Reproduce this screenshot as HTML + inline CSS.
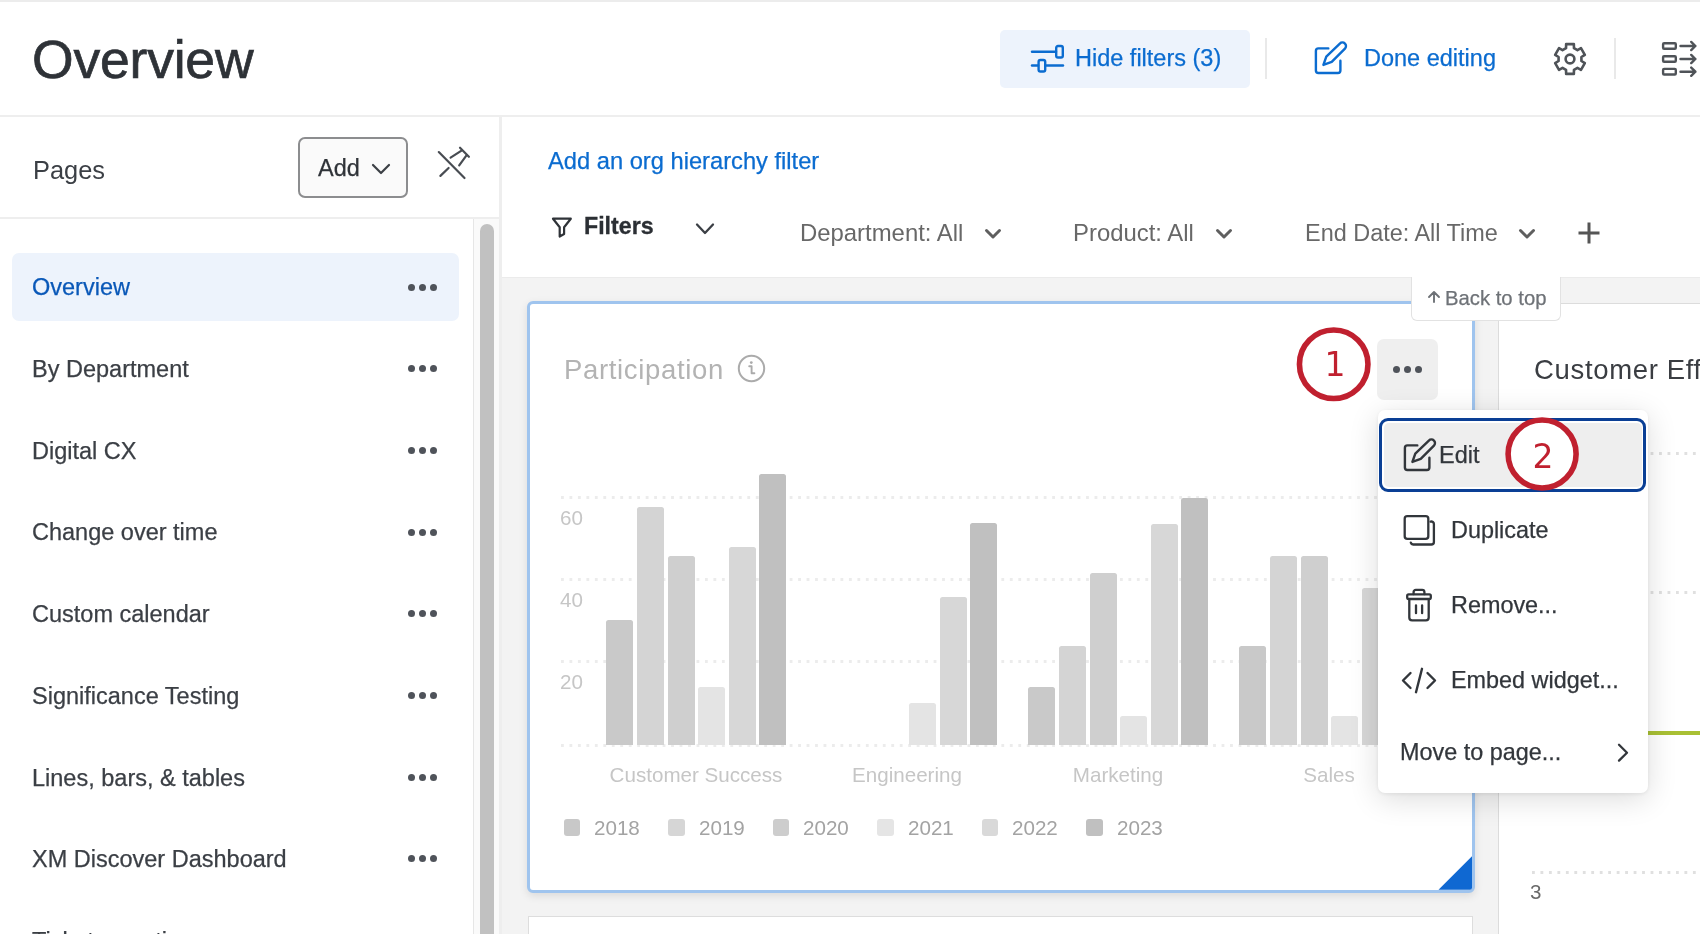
<!DOCTYPE html>
<html lang="en">
<head>
<meta charset="utf-8">
<title>Overview</title>
<style>
html,body{margin:0;padding:0;}
body{width:1700px;height:934px;overflow:hidden;background:#fff;position:relative;font-family:"Liberation Sans",Arial,sans-serif;color:#32363b;}
.abs{position:absolute;}
.t{will-change:transform;position:absolute;line-height:1;white-space:nowrap;}
svg{position:absolute;overflow:visible;}
/* top strip */
#topstrip{left:0;top:0;width:1700px;height:2px;background:#ececec;}
/* header */
#header{left:0;top:2px;width:1700px;height:113px;background:#fff;border-bottom:2px solid #eeeeee;}
#title{left:32.4px;top:32.7px;font-size:53.5px;color:#2e3237;letter-spacing:-0.2px;-webkit-text-stroke:0.7px #2e3237;}
#hidebtn{left:1000px;top:30px;width:250px;height:58px;border-radius:5px;background:#edf3fc;}
.blue{color:#0b6cd0;-webkit-text-stroke:0.25px #0b6cd0;}
.vdiv{width:2px;background:#e9e9e9;}
/* sidebar */
#sidebar{left:0;top:117px;width:499px;height:817px;background:#fff;border-right:3px solid #eeeeee;}
#pageshead{left:0;top:0;width:499px;height:100px;border-bottom:2px solid #eeeeee;}
#addbtn{box-sizing:border-box;left:298px;top:137px;width:110px;height:61px;border:2px solid #8c8d8f;border-radius:7px;background:#fafafa;}
.pitem{left:32px;font-size:23.5px;color:#3b3f45;-webkit-text-stroke:0.25px currentColor;}
.dots{position:absolute;left:407.8px;width:30px;height:8px;}
.dots i{position:absolute;top:0;width:7px;height:7px;border-radius:50%;background:#4f535a;}
.dots i:nth-child(1){left:0}.dots i:nth-child(2){left:11px}.dots i:nth-child(3){left:22px}
#selitem{left:12px;top:253px;width:447px;height:68px;border-radius:7px;background:#edf3fc;}
#sbtrack{left:473px;top:219px;width:25px;height:715px;border-left:1px solid #e6e6e6;background:#fafafa;}
#sbthumb{left:480px;top:224px;width:14px;height:730px;border-radius:7px;background:#c1c1c1;}
/* main */
#main{left:502px;top:117px;width:1198px;height:817px;background:#f3f3f3;}
#filterbar{left:502px;top:117px;width:1198px;height:160px;background:#fff;border-bottom:1.5px solid #ebebeb;}
.ftext{font-size:23.9px;color:#686868;}
/* widget */
#w1{left:527px;top:301px;width:942.3px;height:586.2px;border:3px solid #9fc4ee;border-radius:6px;background:#fff;box-shadow:0 3px 8px rgba(0,0,0,.10);}
#w2{left:1498px;top:302.6px;width:230px;height:700px;border:1.5px solid #dcdcdc;background:#fff;}
#w3{left:528px;top:916px;width:943px;height:60px;border:1px solid #dddddd;background:#fff;}
#backtop{left:1411px;top:277px;width:147.5px;height:42.5px;background:#fff;border:1.5px solid #e2e2e2;border-top:none;border-radius:0 0 6px 6px;}
.chart{font-size:20.6px;color:#c6c6c6;}
.bar{position:absolute;width:27px;border-radius:2.5px 2.5px 0 0;}
.grid{position:absolute;height:3px;background-image:linear-gradient(90deg,#ececec 3px,rgba(236,236,236,0) 3px);background-size:8.47px 3px;background-repeat:repeat-x;}
.grid.dk{background-image:linear-gradient(90deg,#e0e0e0 3.2px,rgba(224,224,224,0) 3.2px);}
.lg{position:absolute;width:16.5px;height:16.5px;border-radius:3px;top:819px;}
/* menu */
#menu{left:1378px;top:410px;width:269.5px;height:383px;border-radius:7px;background:#fff;box-shadow:0 6px 30px rgba(0,0,0,.14),0 1px 4px rgba(0,0,0,.08);}
#editring{left:1378.5px;top:417.8px;width:261.9px;height:68.3px;border:3.4px solid #0a3f95;border-radius:9px;background:#fff;}
#editfill{left:1383.6px;top:422.9px;width:258.8px;height:64px;border-radius:5px;background:#eeeeee;}
.mi{font-size:23.4px;color:#32363b;-webkit-text-stroke:0.25px currentColor;}
.anno{position:absolute;width:63px;height:63px;border:5.5px solid #c0202f;border-radius:50%;background:#fff;}
.annot{font-family:"DejaVu Sans","Liberation Sans",sans-serif;font-size:33px;color:#c0202f;}
#morebtn{left:1376.8px;top:338.6px;width:61px;height:61px;border-radius:7px;background:#efefef;}
</style>
</head>
<body>
<div class="abs" id="header"></div>
<div class="abs" id="topstrip"></div>
<div class="t" id="title">Overview</div>

<!-- header actions -->
<div class="abs" id="hidebtn"></div>
<svg style="left:1031px;top:44px" width="34" height="30" viewBox="0 0 34 30" fill="none" stroke="#0b6cd0" stroke-width="2.4" stroke-linecap="round" stroke-linejoin="round">
  <path d="M1 7.8H25"/><rect x="25.2" y="2" width="6.6" height="11.5" rx="1.8"/>
  <path d="M1 21.5H7"/><rect x="7.6" y="16" width="6.6" height="11.5" rx="1.8"/><path d="M14.6 21.5H32"/>
</svg>
<div class="t blue" style="left:1075px;top:47.3px;font-size:23.5px;">Hide filters (3)</div>
<div class="abs vdiv" style="left:1265px;top:38px;height:41px;"></div>
<svg style="left:1305.5px;top:33.3px" width="60" height="50" viewBox="0 0 60 50" fill="none" stroke="#0b6cd0" stroke-width="2.4" stroke-linecap="round" stroke-linejoin="round">
  <path d="M22.3 15.4H12.4A2.5 2.5 0 0 0 9.9 17.9V37.5A2.5 2.5 0 0 0 12.4 40H31.9A2.5 2.5 0 0 0 34.4 37.5V27.8"/>
  <path d="M17.4 31.9L20.3 23.6L33.85 10.55A3.6 3.6 0 0 1 38.95 15.65L25.7 28.9Z"/>
</svg>
<div class="t blue" style="left:1364px;top:47px;font-size:23.5px;">Done editing</div>
<svg id="gear" style="left:1551.8px;top:40.6px" width="36" height="36" viewBox="-18 -18 36 36" fill="none" stroke="#4f5358" stroke-width="2.6" stroke-linejoin="round">
  <path d="M-3.97 -10.90 L-3.86 -14.91 L3.86 -14.91 L3.97 -10.90 L7.46 -8.89 L10.98 -10.79 L14.84 -4.12 L11.42 -2.01 L11.42 2.01 L14.84 4.12 L10.98 10.79 L7.46 8.89 L3.97 10.90 L3.86 14.91 L-3.86 14.91 L-3.97 10.90 L-7.46 8.89 L-10.98 10.79 L-14.84 4.12 L-11.42 2.01 L-11.42 -2.01 L-14.84 -4.12 L-10.98 -10.79 L-7.46 -8.89Z"/>
  <circle cx="0" cy="0" r="4.4"/>
</svg>
<div class="abs vdiv" style="left:1614px;top:38px;height:41px;"></div>
<svg style="left:1660px;top:40px" width="40" height="38" viewBox="0 0 40 38" fill="none" stroke="#4f5358" stroke-width="2.4" stroke-linecap="round" stroke-linejoin="round">
  <rect x="3.1" y="3.2" width="12.7" height="5.6" rx="1"/><path d="M20.5 6H35.4M31.2 1.9L35.4 6L31.2 10.1"/>
  <rect x="3.1" y="16.2" width="12.7" height="5.6" rx="1"/><path d="M20.5 19H35.4M31.2 14.9L35.4 19L31.2 23.1"/>
  <rect x="3.1" y="28.9" width="12.7" height="5.6" rx="1"/><path d="M20.5 31.7H35.4M31.2 27.6L35.4 31.7L31.2 35.8"/>
</svg>

<!-- SIDEBAR -->
<div class="abs" id="sidebar"><div class="abs" id="pageshead"></div></div>
<div class="t" style="left:32.5px;top:157.5px;font-size:25.4px;color:#3b3f45;">Pages</div>
<div class="abs" id="addbtn"></div>
<div class="t" style="left:318px;top:156.7px;font-size:23.5px;color:#2f3338;-webkit-text-stroke:0.25px #2f3338;">Add</div>
<svg style="left:371px;top:162px" width="20" height="14" viewBox="0 0 20 14" fill="none" stroke="#3b3f45" stroke-width="2.2" stroke-linecap="round" stroke-linejoin="round"><path d="M2 3L10 11L18 3"/></svg>
<svg id="pin" style="left:425px;top:135px" width="60" height="55" viewBox="0 0 60 55" fill="none" stroke="#484c52" stroke-width="2.2" stroke-linecap="round" stroke-linejoin="round">
  <path d="M13.8 17.1L39.5 43"/>
  <path d="M35 12.7L43.9 21.8"/>
  <path d="M25.6 22.7L36.5 15.6"/>
  <path d="M34.2 30.3L41.5 20.3"/>
  <path d="M15.4 40.9L23.6 33"/>
</svg>
<div class="abs" id="sbtrack"></div>
<div class="abs" id="sbthumb"></div>
<div class="abs" id="selitem"></div>
<div class="t pitem" style="top:276.3px;color:#0a58b8;">Overview</div><div class="dots" style="top:283.5px"><i></i><i></i><i></i></div>
<div class="t pitem" style="top:358.0px;">By Department</div><div class="dots" style="top:365.2px"><i></i><i></i><i></i></div>
<div class="t pitem" style="top:439.7px;">Digital CX</div><div class="dots" style="top:446.9px"><i></i><i></i><i></i></div>
<div class="t pitem" style="top:521.4px;">Change over time</div><div class="dots" style="top:528.6px"><i></i><i></i><i></i></div>
<div class="t pitem" style="top:603.1px;">Custom calendar</div><div class="dots" style="top:610.3px"><i></i><i></i><i></i></div>
<div class="t pitem" style="top:684.8px;">Significance Testing</div><div class="dots" style="top:692px"><i></i><i></i><i></i></div>
<div class="t pitem" style="top:766.5px;">Lines, bars, &amp; tables</div><div class="dots" style="top:773.7px"><i></i><i></i><i></i></div>
<div class="t pitem" style="top:848.2px;">XM Discover Dashboard</div><div class="dots" style="top:855.4px"><i></i><i></i><i></i></div>
<div class="t pitem" style="top:929.9px;">Ticket reporting</div>

<!-- MAIN -->
<div class="abs" id="main"></div>
<div class="abs" id="filterbar"></div>
<div class="t blue" style="left:547.5px;top:149.7px;font-size:23.7px;">Add an org hierarchy filter</div>

<!-- filter bar -->
<svg style="left:551px;top:217px" width="22" height="21" viewBox="0 0 22 21" fill="none" stroke="#2f3338" stroke-width="2.2" stroke-linejoin="round" stroke-linecap="round"><path d="M2 1.7H19.8L13.1 10.2V17L8.7 19.5V10.2Z"/></svg>
<div class="t" style="left:583.6px;top:215.2px;font-size:23.2px;font-weight:bold;color:#2b2f34;-webkit-text-stroke:0.3px #2b2f34;">Filters</div>
<svg style="left:695px;top:222px" width="20" height="14" viewBox="0 0 20 14" fill="none" stroke="#3b3f45" stroke-width="2.3" stroke-linecap="round" stroke-linejoin="round"><path d="M2 2.5L10 11L18 2.5"/></svg>
<div class="t ftext" style="left:800px;top:220.9px;">Department: All</div>
<svg class="fchev" style="left:984px;top:228px" width="18" height="12" viewBox="0 0 18 12" fill="none" stroke="#5f5f5f" stroke-width="3" stroke-linecap="round" stroke-linejoin="round"><path d="M2.5 2.5L9 9L15.5 2.5"/></svg>
<div class="t ftext" style="left:1073px;top:220.9px;">Product: All</div>
<svg class="fchev" style="left:1215px;top:228px" width="18" height="12" viewBox="0 0 18 12" fill="none" stroke="#5f5f5f" stroke-width="3" stroke-linecap="round" stroke-linejoin="round"><path d="M2.5 2.5L9 9L15.5 2.5"/></svg>
<div class="t ftext" style="left:1304.5px;top:221.9px;font-size:23.45px;">End Date: All Time</div>
<svg class="fchev" style="left:1518px;top:228px" width="18" height="12" viewBox="0 0 18 12" fill="none" stroke="#5f5f5f" stroke-width="3" stroke-linecap="round" stroke-linejoin="round"><path d="M2.5 2.5L9 9L15.5 2.5"/></svg>
<svg style="left:1578px;top:222px" width="22" height="22" viewBox="0 0 22 22" fill="none" stroke="#555" stroke-width="3" stroke-linecap="butt"><path d="M11 0.5V21.5M0.5 11H21.5"/></svg>

<!-- widgets -->
<div class="abs" id="w3"></div>
<div class="abs" id="w2"></div>
<div class="abs" id="w1"></div>
<div class="t" style="left:564px;top:356.2px;font-size:27.5px;letter-spacing:0.66px;color:#b3b3b3;">Participation</div>
<svg style="left:737px;top:354px" width="29" height="29" viewBox="0 0 29 29" fill="none" stroke="#ababab" stroke-width="2"><circle cx="14.5" cy="14.5" r="12.7"/><path d="M12.2 12.2H14.6V19.3M14.6 19.3H17.4" stroke-width="1.9" stroke-linecap="round" stroke-linejoin="round"/><circle cx="14.3" cy="8.6" r="1.4" fill="#ababab" stroke="none"/></svg>
<div class="grid" style="left:561px;top:496.3px;width:905px;"></div>
<div class="grid" style="left:561px;top:578.1px;width:905px;"></div>
<div class="grid" style="left:561px;top:660.2px;width:905px;"></div>
<div class="grid" style="left:561px;top:743.8px;width:905px;"></div>
<div class="bar" style="left:606.3px;top:620.4px;height:124.9px;background:#c9c9c9"></div>
<div class="bar" style="left:636.9px;top:506.7px;height:238.6px;background:#d4d4d4"></div>
<div class="bar" style="left:667.5px;top:555.7px;height:189.6px;background:#cfcfcf"></div>
<div class="bar" style="left:698.1px;top:687.0px;height:58.3px;background:#e4e4e4"></div>
<div class="bar" style="left:728.7px;top:547.2px;height:198.1px;background:#d7d7d7"></div>
<div class="bar" style="left:759.3px;top:474.0px;height:271.3px;background:#c0c0c0"></div>
<div class="bar" style="left:909.1px;top:702.5px;height:42.8px;background:#e4e4e4"></div>
<div class="bar" style="left:939.7px;top:597.0px;height:148.3px;background:#d7d7d7"></div>
<div class="bar" style="left:970.3px;top:523.3px;height:222.0px;background:#c0c0c0"></div>
<div class="bar" style="left:1028.3px;top:687.0px;height:58.3px;background:#c9c9c9"></div>
<div class="bar" style="left:1058.9px;top:646.0px;height:99.3px;background:#d4d4d4"></div>
<div class="bar" style="left:1089.5px;top:573.0px;height:172.3px;background:#cfcfcf"></div>
<div class="bar" style="left:1120.1px;top:716.0px;height:29.3px;background:#e4e4e4"></div>
<div class="bar" style="left:1150.7px;top:523.5px;height:221.8px;background:#d7d7d7"></div>
<div class="bar" style="left:1181.3px;top:498.0px;height:247.3px;background:#c0c0c0"></div>
<div class="bar" style="left:1239.3px;top:646.0px;height:99.3px;background:#c9c9c9"></div>
<div class="bar" style="left:1269.9px;top:556.0px;height:189.3px;background:#d4d4d4"></div>
<div class="bar" style="left:1300.5px;top:556.0px;height:189.3px;background:#cfcfcf"></div>
<div class="bar" style="left:1331.1px;top:716.0px;height:29.3px;background:#e4e4e4"></div>
<div class="bar" style="left:1361.7px;top:588.0px;height:157.3px;background:#d7d7d7"></div>
<div class="t chart" style="left:560px;top:508.2px;">60</div>
<div class="t chart" style="left:560px;top:590.0px;">40</div>
<div class="t chart" style="left:560px;top:671.9px;">20</div>
<div class="t chart" style="left:546.3px;width:300px;text-align:center;top:764.9px;">Customer Success</div>
<div class="t chart" style="left:757.3px;width:300px;text-align:center;top:764.9px;">Engineering</div>
<div class="t chart" style="left:968.3px;width:300px;text-align:center;top:764.9px;">Marketing</div>
<div class="t chart" style="left:1179.3px;width:300px;text-align:center;top:764.9px;">Sales</div>
<div class="lg" style="left:563.8px;background:#c8c8c8"></div><div class="t" style="left:594.0px;top:817.9px;font-size:20.6px;color:#a3a3a3;">2018</div>
<div class="lg" style="left:668.3px;background:#d6d6d6"></div><div class="t" style="left:698.5px;top:817.9px;font-size:20.6px;color:#a3a3a3;">2019</div>
<div class="lg" style="left:772.8px;background:#cdcdcd"></div><div class="t" style="left:803.0px;top:817.9px;font-size:20.6px;color:#a3a3a3;">2020</div>
<div class="lg" style="left:877.3px;background:#e5e5e5"></div><div class="t" style="left:907.5px;top:817.9px;font-size:20.6px;color:#a3a3a3;">2021</div>
<div class="lg" style="left:981.8px;background:#d9d9d9"></div><div class="t" style="left:1012.0px;top:817.9px;font-size:20.6px;color:#a3a3a3;">2022</div>
<div class="lg" style="left:1086.3px;background:#c0c0c0"></div><div class="t" style="left:1116.5px;top:817.9px;font-size:20.6px;color:#a3a3a3;">2023</div>
<svg style="left:1438px;top:856px" width="34" height="34" viewBox="0 0 34 34"><path d="M0.5 33.8L34 0.3V31.8A2 2 0 0 1 32 33.8Z" fill="#0f68d2"/></svg>

<!-- right widget content -->
<div class="t" style="left:1534.4px;top:355.6px;font-size:27.5px;letter-spacing:0.66px;color:#3a3d42;">Customer Effort</div>
<div class="grid dk" style="left:1531.5px;top:451.5px;width:180px;"></div>
<div class="grid dk" style="left:1531.5px;top:591px;width:180px;"></div>
<div class="grid dk" style="left:1531.5px;top:870.5px;width:180px;"></div>
<div class="abs" style="left:1600px;top:730.5px;width:100px;height:4.5px;background:#a9c034;"></div>
<div class="t" style="left:1529.6px;top:882.4px;font-size:20.6px;color:#6a6a6a;">3</div>

<!-- back to top -->
<div class="abs" id="backtop"></div>
<svg style="left:1427px;top:290px" width="14" height="14" viewBox="0 0 14 14" fill="none" stroke="#6e7277" stroke-width="1.9" stroke-linecap="round" stroke-linejoin="round"><path d="M7 12V2.2M2 7L7 2L12 7"/></svg>
<div class="t" style="left:1445.3px;top:287.7px;font-size:20.3px;color:#6e7277;-webkit-text-stroke:0.25px #6e7277;">Back to top</div>

<!-- more button + annotation 1 -->
<div class="abs" id="morebtn"></div>
<div class="dots" style="left:1393px;top:365.6px;"><i></i><i></i><i></i></div>
<svg style="left:1293px;top:324px" width="82" height="82" viewBox="0 0 82 82"><circle cx="40.7" cy="40.2" r="34.25" fill="#fff" stroke="#c0202f" stroke-width="5.6"/></svg>
<div class="t annot" style="left:1314.8px;width:40px;text-align:center;top:348.3px;">1</div>

<!-- dropdown menu -->
<div class="abs" id="menu"></div>
<div class="abs" id="editring"></div>
<div class="abs" id="editfill"></div>
<svg style="left:1395px;top:430px" width="60" height="50" viewBox="0 0 60 50" fill="none" stroke="#32363b" stroke-width="2.4" stroke-linecap="round" stroke-linejoin="round">
  <path d="M22.3 15.4H12.4A2.5 2.5 0 0 0 9.9 17.9V37.5A2.5 2.5 0 0 0 12.4 40H31.9A2.5 2.5 0 0 0 34.4 37.5V27.8"/>
  <path d="M17.4 31.9L20.3 23.6L33.85 10.55A3.6 3.6 0 0 1 38.95 15.65L25.7 28.9Z"/>
</svg>
<div class="t mi" style="left:1439px;top:443.8px;font-size:23.5px;">Edit</div>
<svg style="left:1501px;top:413px" width="82" height="82" viewBox="0 0 82 82"><circle cx="41.1" cy="41.05" r="34.0" fill="#fff" stroke="#c0202f" stroke-width="5.6"/></svg>
<div class="t annot" style="left:1523px;width:40px;text-align:center;top:439.5px;">2</div>

<svg style="left:1400px;top:510px" width="40" height="40" viewBox="0 0 40 40" fill="none" stroke="#32363b" stroke-width="2.3" stroke-linecap="round" stroke-linejoin="round">
  <rect x="4.7" y="6.2" width="23.6" height="22.7" rx="2.6"/>
  <path d="M30.6 11.6A2.6 2.6 0 0 1 33.9 14.1V31.9A2.6 2.6 0 0 1 31.3 34.5H13.2A2.6 2.6 0 0 1 10.8 32.6"/>
</svg>
<div class="t mi" style="left:1451px;top:519.1px;">Duplicate</div>

<svg style="left:1400px;top:585px" width="40" height="40" viewBox="0 0 40 40" fill="none" stroke="#32363b" stroke-width="2.3" stroke-linecap="round" stroke-linejoin="round">
  <rect x="7.2" y="9.4" width="23.6" height="4.6" rx="1.4"/>
  <path d="M13.6 9.2V7A2.2 2.2 0 0 1 15.8 4.8H22.2A2.2 2.2 0 0 1 24.4 7V9.2"/>
  <path d="M9.3 14.4V32.6A2.8 2.8 0 0 0 12.1 35.4H25.9A2.8 2.8 0 0 0 28.7 32.6V14.4"/>
  <path d="M16 20.3V28.2M22.1 20.3V28.2"/>
</svg>
<div class="t mi" style="left:1450.5px;top:594.4px;">Remove...</div>

<svg style="left:1401px;top:667px" width="36" height="27" viewBox="0 0 36 27" fill="none" stroke="#32363b" stroke-width="2.4" stroke-linecap="round" stroke-linejoin="round">
  <path d="M9.5 6L2 13.5L9.5 21"/><path d="M26.5 6L34 13.5L26.5 21"/><path d="M21 1.8L15 25.2"/>
</svg>
<div class="t mi" style="left:1450.5px;top:669px;">Embed widget...</div>

<div class="t mi" style="left:1399.5px;top:741px;">Move to page...</div>
<svg style="left:1616px;top:742px" width="14" height="21" viewBox="0 0 14 21" fill="none" stroke="#32363b" stroke-width="2.3" stroke-linecap="round" stroke-linejoin="round"><path d="M3 2.8L11 10.7L3 18.6"/></svg>

</body>
</html>
